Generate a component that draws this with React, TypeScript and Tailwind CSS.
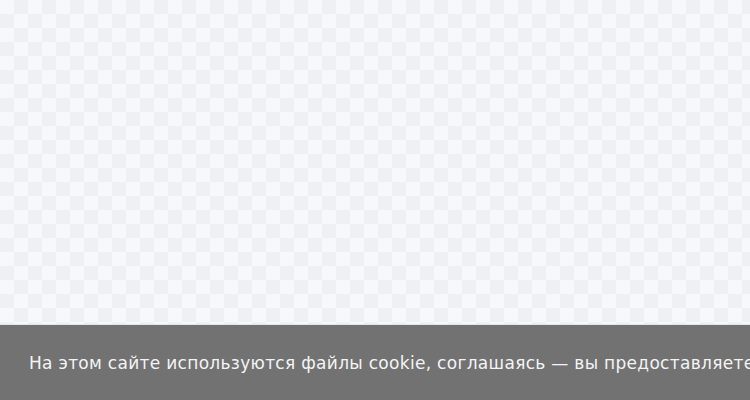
export default function App() {
  return (
    <div className="w-[750px] h-[400px] flex flex-col overflow-hidden">
      {/* checkered backdrop */}
      <div className="flex-1 bg-[#f5f6fa] bg-[conic-gradient(#eef0f4_25%,#f7f8fc_0_50%,#eef0f4_0_75%,#f7f8fc_0)] bg-size-[28px_28px]" />
      <div className="h-px bg-[#e4e5e9]" />
      {/* cookie banner */}
      <div className="h-[75px] bg-[#727272] flex items-center pl-[29px] overflow-hidden">
        <p className="whitespace-nowrap text-[17px] tracking-[0.3px] text-[#f4f4f4] font-['DejaVu_Sans',sans-serif] pt-[2px]">
          На этом сайте используются файлы cookie, соглашаясь — вы предоставляете
        </p>
      </div>
    </div>
  )
}
